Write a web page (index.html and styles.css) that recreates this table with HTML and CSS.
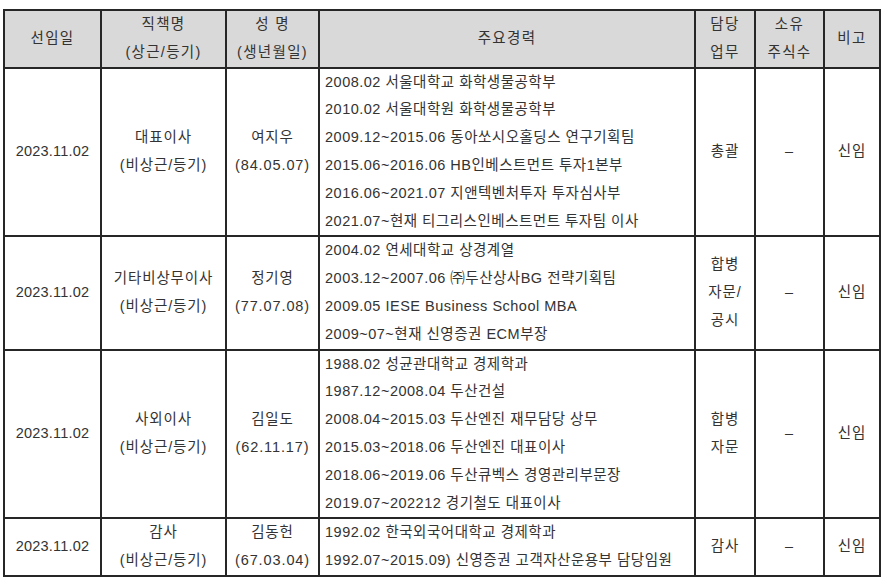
FILE: index.html
```html
<!DOCTYPE html>
<html lang="ko">
<head>
<meta charset="utf-8">
<link rel="stylesheet" href="styles.css">
</head>
<body>
<table class="exec">
  <colgroup>
    <col class="c-date"><col class="c-title"><col class="c-name"><col class="c-career"><col class="c-duty"><col class="c-shares"><col class="c-note">
  </colgroup>
  <thead>
    <tr>
      <th>선임일</th>
      <th>직책명<br>(상근/등기)</th>
      <th>성 명<br>(생년월일)</th>
      <th>주요경력</th>
      <th>담당<br>업무</th>
      <th>소유<br>주식수</th>
      <th>비고</th>
    </tr>
  </thead>
  <tbody>
    <tr>
      <td class="date">2023.11.02</td>
      <td>대표이사<br>(비상근/등기)</td>
      <td>여지우<br>(84.05.07)</td>
      <td class="career">2008.02 서울대학교 화학생물공학부<br>2010.02 서울대학원 화학생물공학부<br>2009.12~2015.06 동아쏘시오홀딩스 연구기획팀<br>2015.06~2016.06 HB인베스트먼트 투자1본부<br>2016.06~2021.07 지앤텍벤처투자 투자심사부<br>2021.07~현재 티그리스인베스트먼트 투자팀 이사</td>
      <td>총괄</td>
      <td>–</td>
      <td>신임</td>
    </tr>
    <tr>
      <td class="date">2023.11.02</td>
      <td>기타비상무이사<br>(비상근/등기)</td>
      <td>정기영<br>(77.07.08)</td>
      <td class="career">2004.02 연세대학교 상경계열<br>2003.12~2007.06 ㈜두산상사BG 전략기획팀<br>2009.05 IESE Business School MBA<br>2009~07~현재 신영증권 ECM부장</td>
      <td>합병<br>자문/<br>공시</td>
      <td>–</td>
      <td>신임</td>
    </tr>
    <tr>
      <td class="date">2023.11.02</td>
      <td>사외이사<br>(비상근/등기)</td>
      <td>김일도<br>(62.11.17)</td>
      <td class="career">1988.02 성균관대학교 경제학과<br>1987.12~2008.04 두산건설<br>2008.04~2015.03 두산엔진 재무담당 상무<br>2015.03~2018.06 두산엔진 대표이사<br>2018.06~2019.06 두산큐벡스 경영관리부문장<br>2019.07~202212 경기철도 대표이사</td>
      <td>합병<br>자문</td>
      <td>–</td>
      <td>신임</td>
    </tr>
    <tr>
      <td class="date">2023.11.02</td>
      <td>감사<br>(비상근/등기)</td>
      <td>김동헌<br>(67.03.04)</td>
      <td class="career">1992.02 한국외국어대학교 경제학과<br>1992.07~2015.09) 신영증권 고객자산운용부 담당임원</td>
      <td>감사</td>
      <td>–</td>
      <td>신임</td>
    </tr>
  </tbody>
</table>
</body>
</html>
```

FILE: styles.css
```css
html, body {
  margin: 0;
  padding: 0;
  background: #ffffff;
}
body {
  padding: 9px 0 0 3px;
  font-family: "Liberation Sans", "Noto Sans CJK KR", sans-serif;
  font-size: 14.5px;
  color: #333333;
}
.exec {
  border-collapse: collapse;
  table-layout: fixed;
  width: 876px;
}
.c-date { width: 97px; }
.c-title { width: 125px; }
.c-name { width: 93px; }
.c-career { width: 376px; }
.c-duty { width: 60px; }
.c-shares { width: 69px; }
.c-note { width: 56px; }
.exec th, .exec td {
  border: 2px solid #262626;
  padding: 0;
  line-height: 27.8px;
  text-align: center;
  vertical-align: middle;
  font-weight: normal;
  white-space: nowrap;
  letter-spacing: 0.9px;
}
.exec th {
  background: #d9d9d9;
  letter-spacing: 1.3px;
}
.exec td.date {
  letter-spacing: 0.2px;
}
.exec td.career {
  text-align: left;
  padding-left: 5px;
  letter-spacing: 0.5px;
}
```
